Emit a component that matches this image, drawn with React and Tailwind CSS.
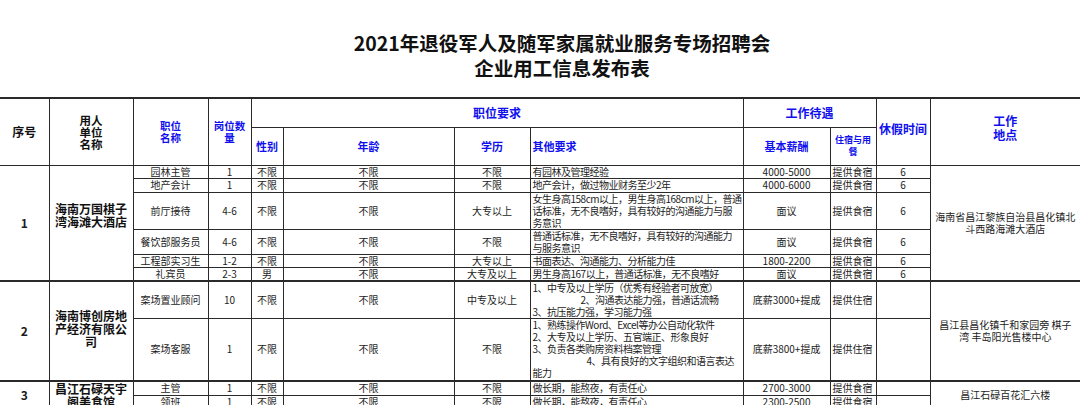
import React from "react";

const FONT = { fontFamily: '"Noto Sans CJK SC", "Noto Sans", sans-serif' };

const B = "border border-[#2a2a2a] p-0 align-middle";

const groups = [
  {
    no: "1",
    name: ["海南万国棋子", "湾海滩大酒店"],
    addr: ["海南省昌江黎族自治县昌化镇北", "斗西路海滩大酒店"],
    rows: [
      { h: 12, job: "园林主管", n: "1", sex: "不限", age: "不限", edu: "不限", other: ["有园林及管理经验"], pay: "4000-5000", room: "提供食宿", rest: "6" },
      { h: 14, job: "地产会计", n: "1", sex: "不限", age: "不限", edu: "不限", other: ["地产会计，做过物业财务至少2年"], pay: "4000-6000", room: "提供食宿", rest: "6" },
      { h: 37, job: "前厅接待", n: "4-6", sex: "不限", age: "不限", edu: "大专以上", other: ["女生身高158cm以上，男生身高168cm以上，普通", "话标准，无不良嗜好，具有较好的沟通能力与服", "务意识"], pay: "面议", room: "提供食宿", rest: "6" },
      { h: 25, job: "餐饮部服务员", n: "4-6", sex: "不限", age: "不限", edu: "不限", other: ["普通话标准，无不良嗜好，具有较好的沟通能力", "与服务意识"], pay: "面议", room: "提供食宿", rest: "6" },
      { h: 13, job: "工程部实习生", n: "1-2", sex: "不限", age: "不限", edu: "大专以上", other: ["书面表达、沟通能力、分析能力佳"], pay: "1800-2200", room: "提供食宿", rest: "6" },
      { h: 13, job: "礼宾员", n: "2-3", sex: "男", age: "不限", edu: "大专及以上", other: ["男生身高167以上，普通话标准，无不良嗜好"], pay: "面议", room: "提供食宿", rest: "6" },
    ],
  },
  {
    no: "2",
    name: ["海南博创房地", "产经济有限公", "司"],
    addr: ["昌江县昌化镇千和家园旁 棋子", "湾 丰岛阳光售楼中心"],
    rows: [
      { h: 37, job: "案场置业顾问", n: "10", sex: "不限", age: "不限", edu: "中专及以上", other: ["1、中专及以上学历（优秀有经验者可放宽）", { t: "2、沟通表达能力强，普通话流畅", ind: 48 }, "3、抗压能力强，学习能力强"], pay: "底薪3000+提成", room: "提供住宿", rest: "" },
      { h: 63, job: "案场客服", n: "1", sex: "不限", age: "不限", edu: "不限", other: ["1、熟练操作Word、Excel等办公自动化软件", "2、大专及以上学历、五官端正、形象良好", "3、负责各类购房资料档案管理", { t: "4、具有良好的文字组织和语言表达", ind: 54 }, "能力"], pay: "底薪3800+提成", room: "提供住宿", rest: "" },
    ],
  },
  {
    no: "3",
    name: ["昌江石碌天宇", "阁美食馆"],
    addr: ["昌江石碌百花汇六楼"],
    rows: [
      { h: 13, job: "主管", n: "1", sex: "不限", age: "不限", edu: "不限", other: ["做长期，能熬夜，有责任心"], pay: "2700-3000", room: "提供食宿", rest: "" },
      { h: 12, job: "领班", n: "1", sex: "不限", age: "不限", edu: "不限", other: ["做长期，能熬夜，有责任心"], pay: "2300-2500", room: "提供食宿", rest: "" },
    ],
  },
];

export default function App() {
  return (
    <div className="w-[1080px] h-[405px] overflow-hidden bg-white text-[#1c1c1c]" style={FONT}>
      <div className="h-[97px] pt-[30px] pl-[44px] text-center font-bold text-[19.5px] leading-[25px] text-[#111]">
        <div>2021年退役军人及随军家属就业服务专场招聘会</div>
        <div>企业用工信息发布表</div>
      </div>
      <table className="table-fixed border-collapse w-[1080px] text-[10px] leading-[12px]">
        <colgroup>
          <col style={{ width: 49 }} />
          <col style={{ width: 84 }} />
          <col style={{ width: 75 }} />
          <col style={{ width: 43 }} />
          <col style={{ width: 32 }} />
          <col style={{ width: 171 }} />
          <col style={{ width: 76 }} />
          <col style={{ width: 213 }} />
          <col style={{ width: 87 }} />
          <col style={{ width: 46 }} />
          <col style={{ width: 54 }} />
          <col style={{ width: 150 }} />
        </colgroup>
        <thead>
          <tr className="h-[29px]">
            <th rowSpan={2} className={`${B} border-l-0 border-t-2 text-[12px] leading-[12px] font-bold text-[#111]`}>序号</th>
            <th rowSpan={2} className={`${B} border-t-2 text-[11.5px] leading-[12px] font-bold text-[#111]`}>用人<br />单位<br />名称</th>
            <th rowSpan={2} className={`${B} border-t-2 text-[10.5px] leading-[12px] font-bold text-[#1010ee]`}>职位<br />名称</th>
            <th rowSpan={2} className={`${B} border-t-2 text-[10.5px] leading-[12px] font-bold text-[#1010ee]`}>岗位数<br />量</th>
            <th colSpan={4} className={`${B} border-t-2 text-[12px] font-bold text-[#1010ee]`}>职位要求</th>
            <th colSpan={2} className={`${B} border-t-2 text-[12px] font-bold text-[#1010ee]`}>工作待遇</th>
            <th rowSpan={2} className={`${B} border-t-2 text-[12px] leading-[13px] font-bold text-[#1010ee] pb-[6px]`}>休假时间</th>
            <th rowSpan={2} className={`${B} border-r-0 border-t-2 text-[12px] leading-[14px] font-bold text-[#1010ee] pb-[8px]`}>工作<br />地点</th>
          </tr>
          <tr className="h-[38px]">
            <th className={`${B} text-[11px] font-bold text-[#1010ee]`}>性别</th>
            <th className={`${B} text-[11px] font-bold text-[#1010ee]`}>年龄</th>
            <th className={`${B} text-[11px] font-bold text-[#1010ee]`}>学历</th>
            <th className={`${B} text-[11px] font-bold text-[#1010ee] text-left pl-[2px]`}>其他要求</th>
            <th className={`${B} text-[11px] font-bold text-[#1010ee]`}>基本薪酬</th>
            <th className={`${B} text-[9px] leading-[12px] font-bold text-[#1010ee]`}>住宿与用<br />餐</th>
          </tr>
        </thead>
        <tbody>
          {groups.map((g, gi) =>
            g.rows.map((r, ri) => {
              const top = ri === 0 && gi > 0 ? "border-t-2" : "";
              return (
                <tr key={`${gi}-${ri}`} style={{ height: r.h }}>
                  {ri === 0 && (
                    <td rowSpan={g.rows.length} className={`${B} ${top} border-l-0 text-center font-bold text-[12px]`}>{g.no}</td>
                  )}
                  {ri === 0 && (
                    <td rowSpan={g.rows.length} className={`${B} ${top} text-center font-bold text-[12px] leading-[13px] text-[#111] ${gi === 0 ? "pb-[16px]" : gi === 1 ? "pb-[4px]" : ""}`}>
                      {g.name.map((l, i) => (
                        <div key={i} className="whitespace-nowrap">{l}</div>
                      ))}
                    </td>
                  )}
                  <td className={`${B} ${top} text-center whitespace-nowrap`}>{r.job}</td>
                  <td className={`${B} ${top} text-center`}>{r.n}</td>
                  <td className={`${B} ${top} text-center`}>{r.sex}</td>
                  <td className={`${B} ${top} text-center`}>{r.age}</td>
                  <td className={`${B} ${top} text-center whitespace-nowrap`}>{r.edu}</td>
                  <td className={`${B} ${top} text-left pl-[2px] align-top whitespace-nowrap overflow-hidden tracking-[-0.5px]`}>
                    {r.other.map((l, i) =>
                      typeof l === "string" ? (
                        <div key={i}>{l}</div>
                      ) : (
                        <div key={i} style={{ paddingLeft: l.ind }}>{l.t}</div>
                      )
                    )}
                  </td>
                  <td className={`${B} ${top} text-center whitespace-nowrap`}>{r.pay}</td>
                  <td className={`${B} ${top} text-left pl-[2px] whitespace-nowrap`}>{r.room}</td>
                  <td className={`${B} ${top} text-center`}>{r.rest}</td>
                  {ri === 0 && (
                    <td rowSpan={g.rows.length} className={`${B} ${top} border-r-0 text-center px-[4px]`}>
                      {g.addr.map((l, i) => (
                        <div key={i} className="whitespace-nowrap">{l}</div>
                      ))}
                    </td>
                  )}
                </tr>
              );
            })
          )}
        </tbody>
      </table>
    </div>
  );
}
